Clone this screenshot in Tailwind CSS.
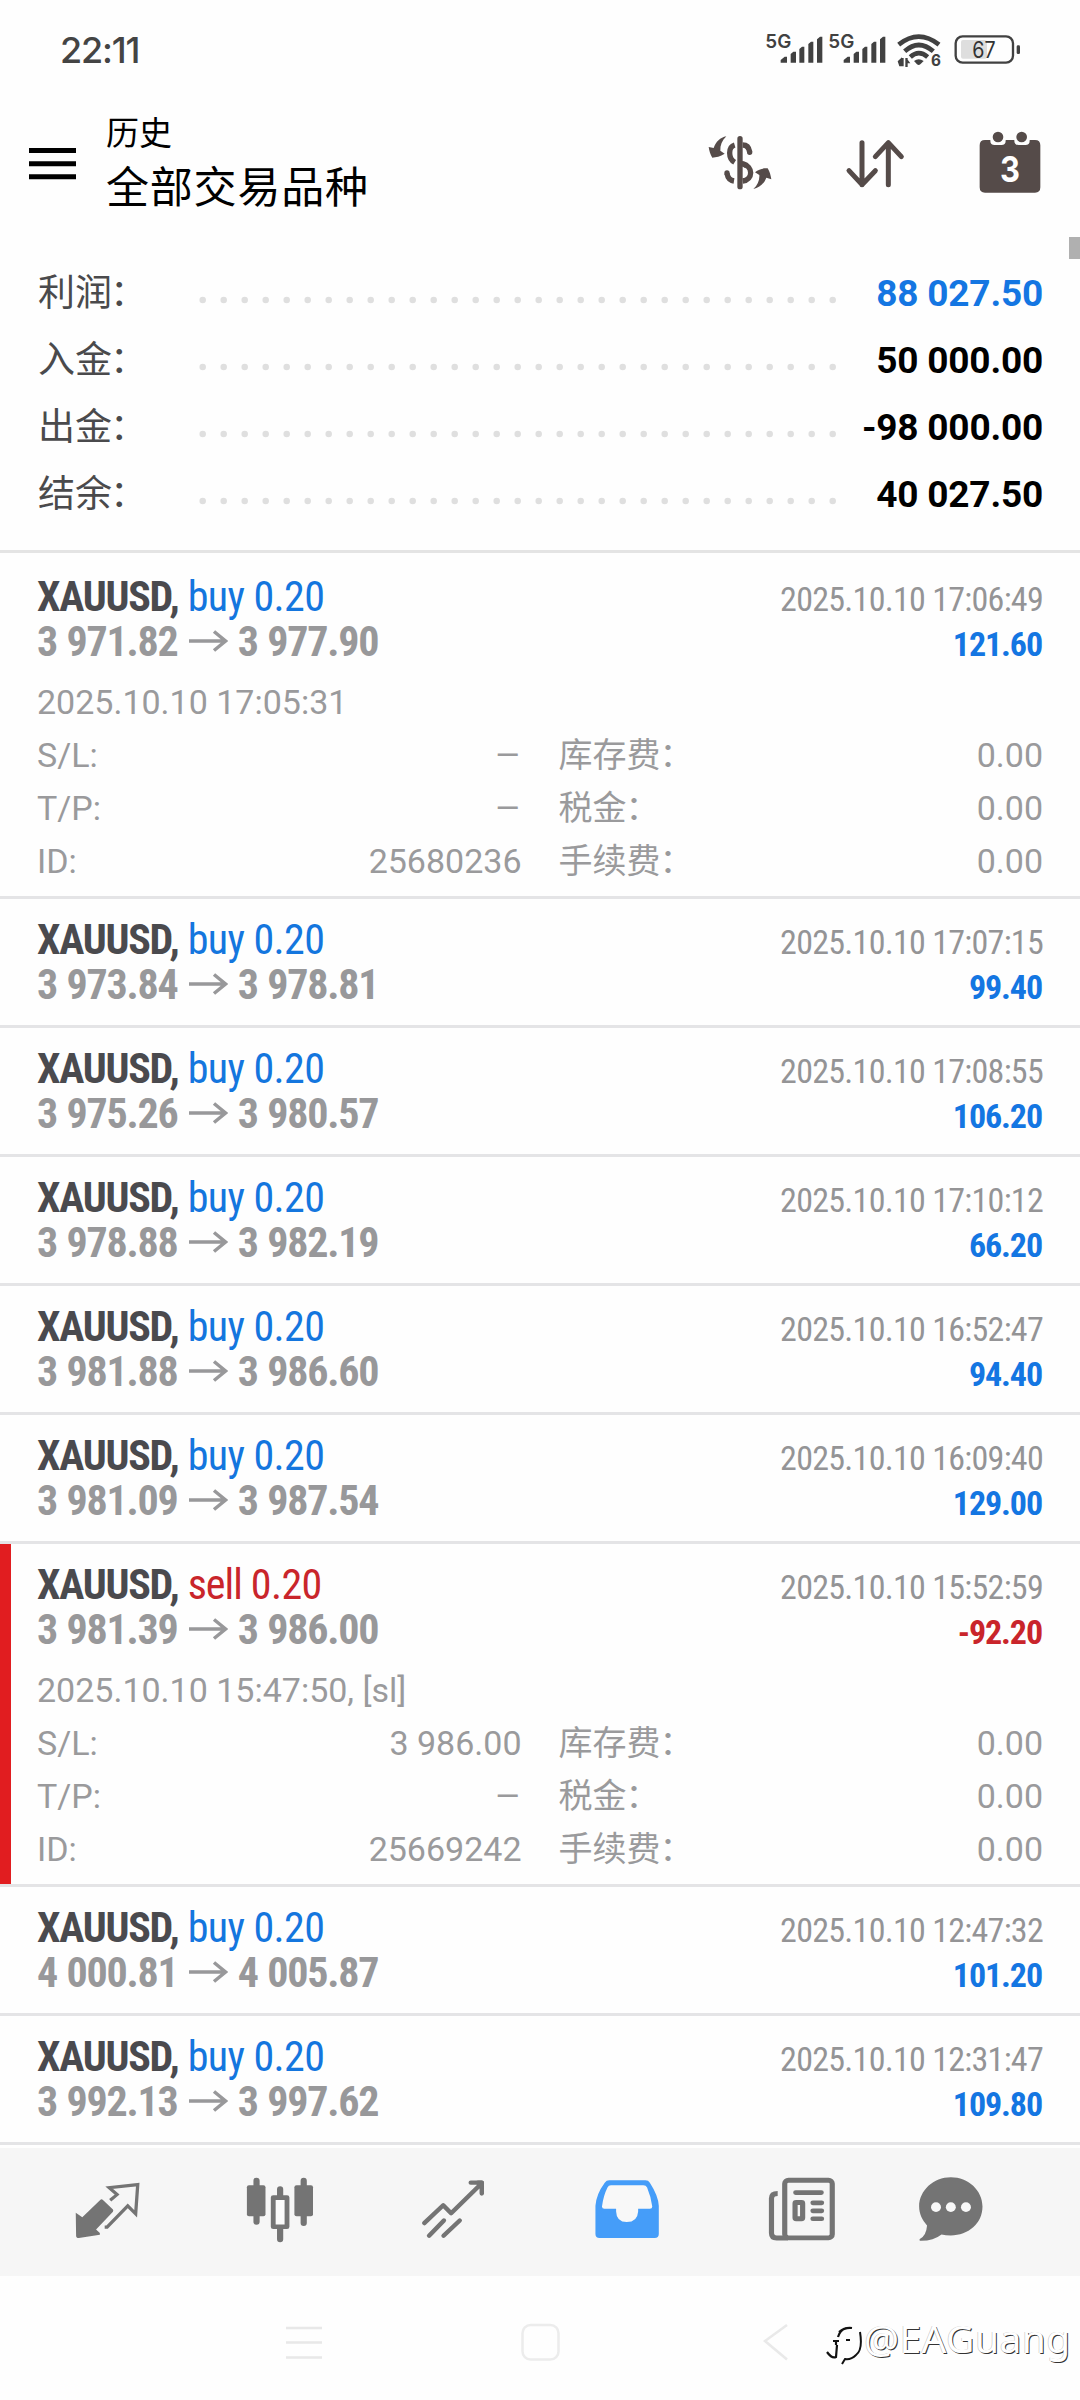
<!DOCTYPE html>
<html lang="zh-CN">
<head>
<meta charset="utf-8">
<title>历史</title>
<script src="https://cdn.jsdelivr.net/npm/@tailwindcss/browser@4"></script>
</head>
<body class="relative flex h-[2400px] w-[1080px] flex-col overflow-hidden bg-[#fefefe] font-['Roboto','Noto_Sans_CJK_SC',sans-serif]">

<!-- status bar -->
<div class="flex h-[100px] items-start justify-between pl-[60px]">
  <div class="mt-[27px] font-['Inter',sans-serif] text-[36px] leading-[46px] font-medium tracking-[-1.2px] text-[#444]">22:11</div>
  <svg class="h-[100px] w-[420px]" viewBox="0 0 1260 300" fill="#414141">
    <g font-family="Inter, sans-serif" font-weight="600" font-size="56">
      <text x="316" y="144" textLength="78" lengthAdjust="spacingAndGlyphs">5G</text>
      <text x="505" y="144" textLength="78" lengthAdjust="spacingAndGlyphs">5G</text>
      <text x="813" y="199" font-size="46" font-weight="700">6</text>
    </g>
    <g id="sig"><path d="M362 188V180L374 170H381V188ZM392 188V162L400 155H408V188ZM418 188V147L426 140H433V188ZM445 188V132L453 125H460V188ZM471 188V118L480 110H487V188Z"/></g>
    <use href="#sig" x="189"/>
    <g fill="none" stroke="#414141" stroke-width="14">
      <path d="M716 134Q776 86 837 134M734 154Q776 116 820 154M751 171Q776 148 803 171"/>
    </g>
    <path d="M762 183Q776 172 791 183L781 193Q776 197 771 193Z"/>
    <path d="M713 184L726 172V199H718ZM724 174H731V199H724ZM736 174H743V201H736ZM741 176L751 190H741Z"/>
    <rect x="903" y="120" width="78" height="56" rx="6" fill="#dedede"/>
    <text x="937" y="174" font-family="Inter, sans-serif" font-size="67" textLength="70" lengthAdjust="spacingAndGlyphs" fill="#333">67</text>
    <rect x="887" y="109" width="172" height="79" rx="21" fill="none" stroke="#414141" stroke-width="7"/>
    <rect x="1070" y="136" width="10" height="26" rx="4"/>
  </svg>
</div>

<!-- app header -->
<header class="flex h-[150px] items-start">
  <svg class="mt-[48px] ml-[29px] h-[32px] w-[47px]" viewBox="0 0 47 32"><path d="M0 0H47V5H0ZM0 13.3H47V18.3H0ZM0 26.3H47V31.3H0Z"/></svg>
  <div class="ml-[30px] w-[500px] text-black">
    <div class="mt-[12px] text-[33px] leading-[44px]">历史</div>
    <div class="mt-[4px] text-[43px] leading-[56px] tracking-[0.8px]">全部交易品种</div>
  </div>
  <svg class="mt-[31px] ml-[101px] h-[62px] w-[66px]" viewBox="140 395 198 186" fill="#554b49">
    <g fill="none" stroke="#554b49" stroke-width="16" stroke-linecap="round">
      <path d="M239 418V562"/>
      <path d="M223 437C203 443 203 477 223 489M247 437C259 437 266 444 268 458M200 522C202 535 209 543 221 545M247 493C279 501 279 541 247 545" stroke-linecap="butt"/>
      <path d="M268 458V459M200 521V522"/>
    </g>
    <path d="M239 481L262 493L255 507L239 497Z"/>
    <path d="M198 411C180 414 166 428 160 446L145 443C147 455 150 466 156 475C167 474 180 471 193 463L180 454C179 438 185 423 198 411Z"/>
    <path d="M279 569C297 566 312 552 318 535L333 540C331 527 328 516 322 507C309 506 296 509 284 519L297 527C298 543 292 557 279 569Z"/>
  </svg>
  <svg class="mt-[37px] ml-[71px] h-[52px] w-[62px]" viewBox="553 410 186 156" fill="none" stroke="#554b49" stroke-width="15" stroke-linecap="round" stroke-linejoin="round">
    <path d="M607 427V553M568 511L607 553L647 511M686 553V427M647 469L686 427L725 469"/>
  </svg>
  <svg class="mt-[31px] ml-[72px] h-[62px] w-[64px]" viewBox="955 393 192 186" fill="#554b49">
    <path d="M976 420H992V422Q992 435 1005 435H1025Q1038 435 1038 422V420H1064V422Q1064 435 1077 435H1097Q1110 435 1110 422V420H1126Q1142 420 1142 436V562Q1142 578 1126 578H976Q960 578 960 562V436Q960 420 976 420Z"/>
    <circle cx="1015" cy="411" r="16"/><circle cx="1086" cy="411" r="16"/>
    <text x="1051" y="545" text-anchor="middle" font-family="Inter, sans-serif" font-weight="700" font-size="107" textLength="60" lengthAdjust="spacingAndGlyphs" fill="#fff">3</text>
  </svg>
</header>
<div class="absolute top-[237px] right-0 h-[22px] w-[11px] bg-[#b0b0b0]"></div>

<!-- totals -->
<section id="totals" class="flex h-[303px] flex-col border-b-[3px] border-[#e4e4e4] pt-[10px]"></section>

<!-- deals -->
<main id="deals" class="mt-[3px] flex h-[1592px] flex-col"></main>

<!-- tab bar -->
<nav class="mt-[-1px] flex h-[131px] shrink-0 items-start border-t-[3px] border-[#fefefe] bg-[#f6f6f6] pt-[28px] text-[#747474]">
  <svg class="ml-[73px] h-[68px] w-[70px] shrink-0" viewBox="212 170 203.3 205" preserveAspectRatio="none" fill="currentColor">
    <path d="M220 281L239 294L291 242Q295 238 299 242L328 271Q330 274 328 278L279 331L290 342V347L229 357Q221 357 221 350Z"/>
    <path d="M320 243L340 226L317 205L400 196L394 284L371 260L311 324H304" fill="none" stroke="currentColor" stroke-width="9.5"/>
  </svg>
  <svg class="ml-[102px] h-[68px] w-[70px] shrink-0" viewBox="711.5 170 203.3 205" preserveAspectRatio="none" fill="currentColor">
    <path d="M745 184V308M882 184V312M813.500 210V235M813.500 325V361" stroke="currentColor" stroke-width="18" stroke-linecap="round"/>
    <rect x="717" y="198" width="54" height="93" rx="6"/><rect x="855" y="198" width="54" height="93" rx="6"/>
    <rect x="793.500" y="235" width="40" height="88" fill="#fafafa" stroke="currentColor" stroke-width="14" stroke-linejoin="round"/>
  </svg>
  <svg class="ml-[104px] h-[68px] w-[70px] shrink-0" viewBox="1216.7 170 203.3 205" preserveAspectRatio="none" fill="none" stroke="currentColor" stroke-width="13" stroke-linecap="round" stroke-linejoin="round">
    <path d="M1232 312L1287 258L1310 282L1396 195M1367 190H1399V223M1246 350L1289 304M1288 350L1335 304"/>
    <path d="M1388 190H1399V202Z" fill="currentColor"/>
  </svg>
  <svg class="ml-[103px] h-[68px] w-[70px] shrink-0" viewBox="151 170 203.3 205" preserveAspectRatio="none" fill="#459df9">
    <path d="M201 183H306Q315 183 319 190Q344 230 345 260V345Q345 357 333 357H173Q161 357 161 345V260Q163 225 188 190Q193 183 201 183Z"/>
    <path d="M206 198H300Q308 198 311 205Q323 235 326 262Q326 269 319 269H285V277Q283 309 252 309Q222 309 221 277V269H187Q180 269 180 262Q184 230 196 205Q199 198 206 198Z" fill="#f8f8f8"/>
  </svg>
  <svg class="ml-[105px] h-[68px] w-[70px] shrink-0" viewBox="659 170 203.3 205" preserveAspectRatio="none" fill="none" stroke="currentColor" stroke-width="15">
    <rect x="710.500" y="182.500" width="138" height="174" rx="11"/>
    <path d="M690 223Q672 223 672 238V342Q672 357 687 357H720"/>
    <path d="M742 220H817M792 251H818M792 275H818M792 299H818" stroke-width="14" stroke-linecap="round"/>
    <rect x="740.500" y="250" width="22" height="49" rx="3" stroke-width="15"/>
  </svg>
  <svg class="ml-[79px] h-[68px] w-[70px] shrink-0" viewBox="1091.9 170 203.3 205" preserveAspectRatio="none" fill="currentColor">
    <path d="M1193 174C1244 174 1285 214 1285 262C1285 313 1244 349 1193 349Q1178 349 1166 346Q1142 366 1103 365Q1101 362 1103 360Q1122 349 1124 319C1110 303 1101 284 1101 262C1101 214 1143 174 1193 174Z"/>
    <g fill="#f8f8f8"><circle cx="1150" cy="264" r="14.500"/><circle cx="1193" cy="264" r="14.500"/><circle cx="1237" cy="264" r="14.500"/></g>
  </svg>
</nav>

<!-- system navigation -->
<div class="flex h-[124px] shrink-0 items-start">
  <svg class="mt-[46px] ml-[280px] h-[44px] w-[520px] shrink-0" viewBox="280 2321 520 44" fill="none" stroke="#e8e8e8" stroke-width="2.500">
    <path d="M286 2327H322M286 2341.500H322M286 2356.500H322"/>
    <rect x="522.500" y="2324" width="36" height="34.500" rx="8" stroke="#ececec"/>
    <path d="M787 2324L765 2340L787 2358.500" stroke="#e9e9e9"/>
  </svg>
</div>
<div class="absolute top-[2315px] left-[826px] flex items-start">
  <svg class="mt-[9px] h-[44px] w-[38px]" viewBox="826 2324 38 44" fill="none" stroke="#111" stroke-width="2.200">
    <path d="M839 2332Q845 2327 852 2328M838 2337Q840 2330 846 2328M833 2341H839M836 2341V2345M827 2352Q832 2359 836 2357L837 2345M846 2340H850"/>
    <path d="M860 2332Q863 2350 856 2355Q851 2360 845 2359L842 2364" stroke-width="2"/>
  </svg>
  <div class="font-['Noto_Sans','Open_Sans',sans-serif] text-[39px] leading-[46px] tracking-[0.4px] text-white [text-shadow:1px_1px_0_#333,-0.5px_-0.5px_0.5px_#bbb]">@EAGuang</div>
</div>

<script>
const totals = [['利润', '88 027.50', 1], ['入金', '50 000.00'], ['出金', '-98 000.00'], ['结余', '40 027.50']];
document.getElementById('totals').innerHTML = totals.map(([k, v, blue]) => `
  <div class="flex h-[67px] items-baseline pr-[37px] pl-[38px] leading-[67px]">
    <div class="w-[155px] text-[37px] text-[#4a4a4c]">${k}<span class="-ml-[2px]">：</span></div>
    <svg class="h-[10px] w-[650px] translate-y-[7px] self-center" viewBox="193 0 650 10"><path d="M202.700 5H834" fill="none" stroke="#dfdfdf" stroke-width="6.500" stroke-linecap="round" stroke-dasharray="0 21"/></svg>
    <div class="flex-1 text-right text-[37px] font-bold tracking-[-0.2px] whitespace-nowrap ${blue ? 'text-[#1476e2]' : 'text-black'}">${v}</div>
  </div>`).join('');

const arrow = '<svg class="mr-[10px] ml-[11px] h-[22px] w-[39px]" viewBox="0 0 39 22" fill="none" stroke="#98989a" stroke-width="3.500"><path d="M0 11H36M25 1.500L36.500 11L25 20.500"/></svg>';
const deals = [
  ['3 971.82', '3 977.90', '17:06:49', '121.60', ['17:05:31', '–', '25680236']],
  ['3 973.84', '3 978.81', '17:07:15', '99.40'],
  ['3 975.26', '3 980.57', '17:08:55', '106.20'],
  ['3 978.88', '3 982.19', '17:10:12', '66.20'],
  ['3 981.88', '3 986.60', '16:52:47', '94.40'],
  ['3 981.09', '3 987.54', '16:09:40', '129.00'],
  ['3 981.39', '3 986.00', '15:52:59', '-92.20', ['15:47:50, [sl]', '3 986.00', '25669242']],
  ['4 000.81', '4 005.87', '12:47:32', '101.20'],
  ['3 992.13', '3 997.62', '12:31:47', '109.80'],
];
const value = v => v === '–'
  ? '<span class="inline-block origin-right scale-x-120">–</span>'
  : `<span>${v}</span>`;
const pair = (k, v) => `<div class="flex justify-between"><span>${k}</span>${value(v)}</div>`;
const cost = k => pair(`${k}<span class="-ml-[1px]">：</span>`, '0.00');
document.getElementById('deals').innerHTML = deals.map(([a, b, t, p, d]) => {
  const sell = p[0] === '-';
  return `
  <article class="relative shrink-0 border-b-[3px] border-[#e4e4e6] pt-[18px] pr-[37px] pl-[37px] ${d ? 'h-[343px]' : 'h-[129px]'}">
    ${sell ? '<div class="absolute top-0 left-0 h-full w-[11px] bg-[#e11d20]"></div>' : ''}
    <div class="flex h-[45px] items-baseline justify-between font-['Roboto_Condensed','Roboto'] text-[42px] leading-[45px] [font-stretch:75%]">
      <div class="whitespace-nowrap"><span class="font-bold tracking-[-1.25px] text-[#4a4a4e]">XAUUSD,</span><span class="tracking-[-0.6px] ${sell ? 'text-[#c9252b]' : 'text-[#1476de]'}"> ${sell ? '<span class="tracking-[-1px]">sell</span>' : 'buy'} 0.20</span></div>
      <div class="text-[34px] tracking-[-0.72px] text-[#949496]">2025.10.10 ${t}</div>
    </div>
    <div class="flex h-[45px] items-baseline justify-between font-['Roboto_Condensed','Roboto'] text-[42px] leading-[45px] font-bold [font-stretch:75%]">
      <div class="flex items-center tracking-[-1.2px] [word-spacing:1px] whitespace-nowrap text-[#98989a]"><span>${a}</span>${arrow}<span>${b}</span></div>
      <div class="pr-px text-[34px] tracking-[-1.1px] ${sell ? 'text-[#c9252b]' : 'text-[#1476e2]'}">${p}</div>
    </div>
    ${d ? `<div class="mt-[12px] text-[34px] leading-[53px] font-normal text-[#9a9a9c]">
      <div>2025.10.10 ${d[0]}</div>
      <div class="grid grid-cols-2 gap-x-[37px]">
        ${pair('S/L:', d[1])}${cost('库存费')}
        ${pair('T/P:', '–')}${cost('税金')}
        ${pair('ID:', d[2])}${cost('手续费')}
      </div>
    </div>` : ''}
  </article>`;
}).join('');
</script>
</body>
</html>
